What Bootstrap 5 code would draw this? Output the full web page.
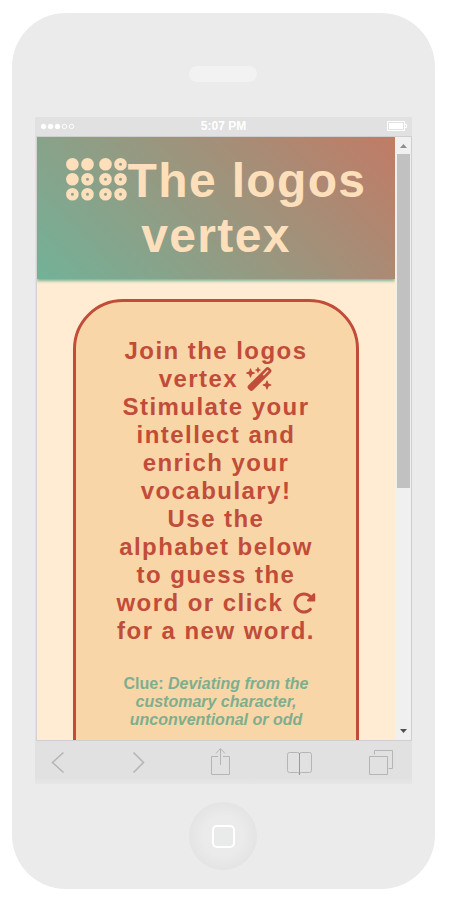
<!DOCTYPE html>
<html lang="en">
<head>
<meta charset="utf-8">
<meta name="viewport" content="width=device-width, initial-scale=1">
<title>The logos vertex</title>
<link rel="stylesheet" href="https://cdn.jsdelivr.net/npm/bootstrap@5.3.0/dist/css/bootstrap.min.css">
<style>
body{font-family:"Liberation Sans",Arial,sans-serif;background:#fff;height:906px;overflow:hidden;padding:13px 0 0 12px}
.phone{width:423px;height:876px;border-radius:54px;background:#ebebeb}
.speaker-area{height:104px;padding:53px 1px 0 0}
.speaker{width:68px;height:16px;border-radius:8px;background:#f2f2f2}
.screen{width:377px;margin-left:23px;background:#e1e1e1}
.status{height:19px;padding:0 5px;color:#fff;font-size:12px;font-weight:bold;line-height:19px}
.status>*{flex:1 1 0}
.viewport{height:605px;border:1px solid #cfcfcf;border-left-color:#d3d3d3;margin-left:1px;background:#ffecd3}
.page-area{width:358px}
.site-header{height:142px;padding-top:16px;background:linear-gradient(45deg,#72b298,#c17b66);box-shadow:0 2px 3px #72b292}
.site-header h1{font-size:48px;font-weight:bold;letter-spacing:1.35px;line-height:55px;color:#fde0bb}
.site-header h1 svg{vertical-align:-4px}
.puzzle{width:286px;height:560px;margin-top:20px;border:3px solid #c14c39;border-radius:50px;background:#f9d6a8;padding-top:35px}
.puzzle h2{font-size:24px;font-weight:bold;letter-spacing:1.45px;line-height:28px;color:#c14c39;margin-bottom:30px}
.puzzle h2 svg{height:24px;vertical-align:-3.5px}
.clue{font-size:16px;font-weight:bold;line-height:18px;color:#7fae8e}
.scroll-track{width:17px;background:#f0f0f0}
.thumb{width:13px;height:334px;background:#c1c1c1}
.toolbar{height:43px;background:linear-gradient(#e1e1e1 85%,#e6e6e6)}
.home-area{padding:18px 1px 0 0}
.home{width:68px;height:68px;border-radius:50%;background:radial-gradient(circle,#ebebeb 40%,#e4e4e4 70%)}
.home-key{width:23px;height:23px;border:2px solid #fff;border-radius:5px;background:#e9ebeb;margin-left:1px}
</style>
<script src="https://cdn.jsdelivr.net/npm/bootstrap@5.3.0/dist/js/bootstrap.bundle.min.js"></script>
</head>
<body>
<div class="phone">
  <div class="speaker-area"><div class="speaker mx-auto"></div></div>
  <div class="screen">
    <div class="status d-flex align-items-center">
      <svg height="8" viewBox="0 0 116 8" preserveAspectRatio="xMinYMid meet"><g fill="#fff" stroke="#fff"><circle cx="3.5" cy="3.500" r="2.3"/><circle cx="10.5" cy="3.500" r="2.3"/><circle cx="17.5" cy="3.500" r="2.3"/><circle cx="24.5" cy="3.500" r="2.2" fill="none"/><circle cx="31.5" cy="3.500" r="2.2" fill="none"/></g></svg>
      <span class="text-center">5:07 PM</span>
      <span class="d-flex justify-content-end"><svg width="20" height="11" viewBox="0 0 20 11"><path d="M.5.5h17v9H.5zM17.5 3.5h2v3h-2" fill="none" stroke="#fff"/><path d="M2 2h14v6H2z" fill="#fff"/></svg></span>
    </div>
    <div class="viewport d-flex overflow-hidden">
      <main class="page-area flex-shrink-0 text-center">
        <header class="site-header">
          <h1 class="m-0 text-nowrap"><svg width="62" height="43" viewBox="0 0 62 43" fill="#fde0bb"><circle cx="6.4" cy="6.3" r="6.3"/><circle cx="21.5" cy="6.3" r="6.3"/><circle cx="39.5" cy="6.3" r="6.3"/><circle cx="6.4" cy="21.3" r="6.3"/><g fill="none" stroke="#fde0bb" stroke-width="4.8"><circle cx="54.5" cy="6.3" r="3.9"/><circle cx="21.5" cy="21.3" r="3.9"/><circle cx="39.5" cy="21.3" r="3.9"/><circle cx="54.5" cy="21.3" r="3.9"/><circle cx="6.4" cy="36.3" r="3.9"/><circle cx="21.5" cy="36.3" r="3.9"/><circle cx="39.5" cy="36.3" r="3.9"/><circle cx="54.5" cy="36.3" r="3.9"/></g></svg>The logos<br>vertex</h1>
        </header>
        <section class="puzzle mx-auto">
          <h2 class="text-nowrap mt-0">Join the logos<br>vertex <svg viewBox="0 0 576 512" fill="currentColor"><path d="M234.7 42.7L197 56.8c-3 1.1-5 4-5 7.2s2 6.1 5 7.2l37.7 14.1L248.8 123c1.1 3 4 5 7.2 5s6.1-2 7.2-5l14.1-37.7L315 71.2c3-1.1 5-4 5-7.2s-2-6.1-5-7.2L277.3 42.7 263.2 5c-1.1-3-4-5-7.2-5s-6.1 2-7.2 5L234.7 42.7zM46.1 395.4c-18.7 18.7-18.7 49.1 0 67.9l34.6 34.6c18.7 18.7 49.1 18.7 67.9 0L529.9 116.5c18.7-18.7 18.7-49.1 0-67.9L495.3 14.1c-18.7-18.7-49.1-18.7-67.9 0L46.1 395.4zM484.6 82.6l-105 105-23.3-23.3 105-105 23.3 23.3zM7.5 117.2C3 118.9 0 123.2 0 128s3 9.1 7.5 10.8L64 160l21.2 56.5c1.7 4.5 6 7.5 10.8 7.5s9.1-3 10.8-7.5L128 160l56.5-21.2c4.5-1.7 7.5-6 7.5-10.8s-3-9.1-7.5-10.8L128 96 106.8 39.5C105.1 35 100.8 32 96 32s-9.1 3-10.8 7.5L64 96 7.5 117.2zm352 256c-4.5 1.7-7.5 6-7.5 10.8s3 9.1 7.5 10.8L416 416l21.2 56.5c1.7 4.5 6 7.5 10.8 7.5s9.1-3 10.8-7.5L480 416l56.5-21.2c4.5-1.7 7.5-6 7.5-10.8s-3-9.1-7.5-10.8L480 352l-21.2-56.5c-1.7-4.5-6-7.5-10.8-7.5s-9.1 3-10.8 7.5L416 352l-56.5 21.2z"/></svg><br>Stimulate your<br>intellect and<br>enrich your<br>vocabulary!<br>Use the<br>alphabet below<br>to guess the<br>word or click <svg viewBox="0 0 512 512" fill="currentColor"><path d="M463.5 224H472c13.3 0 24-10.7 24-24V72c0-9.7-5.8-18.5-14.8-22.2s-19.3-1.7-26.2 5.2L413.4 96.6c-87.6-86.5-228.7-86.2-315.8 1c-87.5 87.5-87.5 229.3 0 316.8s229.3 87.5 316.8 0c12.5-12.5 12.5-32.8 0-45.3s-32.8-12.5-45.3 0c-62.5 62.5-163.8 62.5-226.3 0s-62.5-163.8 0-226.3c62.2-62.2 162.7-62.5 225.3-1L327 183c-6.9 6.9-8.9 17.2-5.2 26.2s12.5 14.8 22.2 14.8H463.5z"/></svg><br>for a new word.</h2>
          <p class="clue m-0">Clue: <em>Deviating from the<br>customary character,<br>unconventional or odd</em></p>
        </section>
      </main>
      <div class="scroll-track d-flex flex-column align-items-center">
        <svg width="17" height="17" viewBox="0 0 17 17" class="flex-shrink-0"><path d="M5 11h7L8.500 7z" fill="#8f8f8f"/></svg>
        <div class="thumb"></div>
        <svg width="17" height="17" viewBox="0 0 17 17" class="mt-auto flex-shrink-0"><path d="M5 6h7L8.500 10z" fill="#505050"/></svg>
      </div>
    </div>
    <div class="toolbar">
      <svg class="d-block" width="377" height="43" viewBox="0 0 377 43" fill="none" stroke="#b5b5b5"><path d="M28.500 11.500L17.500 21.500l11 10M98.500 11.500l10 10-10 10" stroke-width="1.500"/><path d="M183 15.500h-6.500v18h18v-18H188M185.500 24V8M181 12.500l4.500-5 4.500 5"/><path d="M254.500 11.500h8q2 0 2 1.500 0-1.500 2-1.500h8q2 0 2 2v16q0 2-2 2h-8q-2 0-2 1.500 0-1.500-2-1.500h-8q-2 0-2-2v-16q0-2 2-2z"/><path d="M264.500 12v22" stroke="#999"/><path d="M334.500 15.500h18v18h-18zM339.500 13.500v-4h18v18h-4"/></svg>
    </div>
  </div>
  <div class="home-area"><div class="home mx-auto d-flex align-items-center justify-content-center"><div class="home-key"></div></div></div>
</div>
</body>
</html>
